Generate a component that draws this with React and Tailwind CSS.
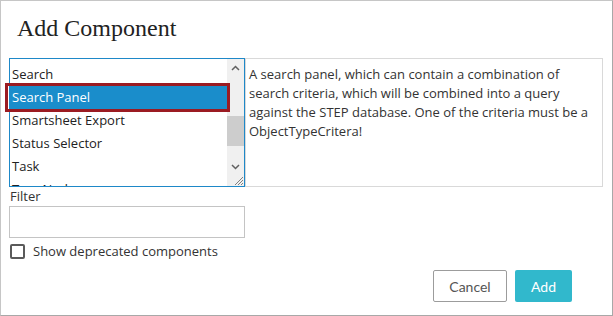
import React from "react";

const items = ["Search", "Search Panel", "Smartsheet Export", "Status Selector", "Task", "Tree Node"];

export default function App() {
  return (
    <div className="w-[613px] h-[316px] bg-white border border-[#c6c6c6] border-r-[#a8a8a8] border-b-[#a8a8a8] box-border flex flex-col text-[#333] overflow-hidden" style={{ fontFamily: '"Open Sans", "Noto Sans", sans-serif' }}>
      <div className="pl-[16px] pt-[13px] h-[57px] text-[24px] leading-[28px] text-[#222]" style={{ fontFamily: '"Liberation Serif", serif' }}>
        Add Component
      </div>
      <div className="flex pl-[8px] pr-[9px]">
        <div className="relative w-[236px] h-[129px] shrink-0">
          <div className="w-full h-full border border-[#1e88c8] flex overflow-hidden">
            <div className="flex-1 flex flex-col pt-[4px] text-[13px] leading-[23px] text-[#222]">
              {items.map((it) => (
                <div key={it} className={"pl-[2px] h-[23px] shrink-0 whitespace-nowrap " + (it === "Search Panel" ? "bg-[#1a8dcb] text-white" : "")}>
                  {it}
                </div>
              ))}
            </div>
            <div className="w-[17px] bg-[#f0f0f0] flex flex-col items-center shrink-0">
              <div className="h-[17px] flex items-center justify-center mt-[1px]">
                <svg width="9" height="6" viewBox="0 0 9 6"><path d="M1 5 L4.5 1.5 L8 5" fill="none" stroke="#606060" strokeWidth="1.5" /></svg>
              </div>
              <div className="h-[40px]" />
              <div className="w-[17px] h-[31px] bg-[#cdcdcd]" />
              <div className="h-[12px]" />
              <div className="h-[17px] flex items-center justify-center">
                <svg width="9" height="6" viewBox="0 0 9 6"><path d="M1 1 L4.5 4.5 L8 1" fill="none" stroke="#606060" strokeWidth="1.5" /></svg>
              </div>
              <div className="flex-1 w-full flex items-end justify-end">
                <svg width="11" height="11" viewBox="0 0 11 11">
                  <path d="M10 2 L2 10 M10 5 L5 10 M10 8 L8 10" stroke="#808080" strokeWidth="1" />
                </svg>
              </div>
            </div>
          </div>
          <div className="absolute left-[-4px] top-[25px] w-[225px] h-[29px] border-[3px] border-[#9b1b22] box-border pointer-events-none" />
        </div>
        <div className="flex-1 h-[129px] border border-[#d9d9d9] pl-[3px] pt-[6px] text-[13px] leading-[19px] text-[#333]">
          A search panel, which can contain a combination of search criteria, which will be combined into a query against the STEP database. One of the criteria must be a ObjectTypeCritera!
        </div>
      </div>
      <div className="pl-[9px] pt-[1px] text-[13px] leading-[17px] text-[#333]">Filter</div>
      <div className="ml-[8px] mt-[1px] w-[236px] h-[32px] border border-[#c4c4c4] box-border" />
      <div className="flex items-center ml-[9px] mt-[5px] h-[16px]">
        <div className="w-[15px] h-[15px] border-2 border-[#5a5a5a] rounded-[2px] box-border" />
        <span className="ml-[8px] text-[13px] leading-[16px] text-[#333]">Show deprecated components</span>
      </div>
      <div className="flex justify-end gap-[8px] mt-[11px] pr-[40px]" style={{ fontFamily: 'Lato, sans-serif' }}>
        <button className="w-[74px] h-[32px] border border-[#9c9c9c] bg-white text-[14px] text-[#555] rounded-[2px]">Cancel</button>
        <button className="w-[57px] h-[32px] bg-[#31b8cc] text-white text-[14px] rounded-[2px]">Add</button>
      </div>
    </div>
  );
}
